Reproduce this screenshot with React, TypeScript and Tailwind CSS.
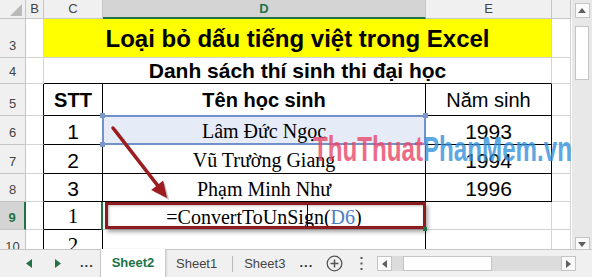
import React from "react";

const hdrCell =
  "h-full flex items-center justify-center border-r border-b border-[#c6c6c6]";

function RowHead({ n, active }: { n: string; active?: boolean }) {
  return active ? (
    <div className="w-[26px] h-full shrink-0 bg-[#d4d4d4] border-r-2 border-b border-r-[#217346] border-b-[#c6c6c6] flex items-end justify-center pb-[5px] text-[13px] leading-none font-bold text-[#217346]">
      {n}
    </div>
  ) : (
    <div className="w-[26px] h-full shrink-0 bg-[#f0f0f0] border-r border-b border-[#c6c6c6] flex items-end justify-center pb-[5px] text-[13px] leading-none text-[#444]">
      {n}
    </div>
  );
}

export default function App() {
  return (
    <div className="w-[592px] h-[277px] overflow-hidden bg-white font-['Liberation_Sans',Arial,sans-serif] text-black">
      <div className="flex h-[249px]">
        {/* Grid */}
        <div className="relative w-[572px] h-[249px] overflow-hidden">
          {/* header row */}
          <div className="flex h-[19px] bg-[#f0f0f0] text-[13px] text-[#444]">
            <div className="w-[26px] h-full border-r border-b border-[#c6c6c6] flex items-end justify-end pr-[3px] pb-[2px]">
              <svg width="12" height="12" viewBox="0 0 12 12">
                <polygon points="12,0 12,12 0,12" fill="#b9b9b9" />
              </svg>
            </div>
            <div className={"w-[18px] " + hdrCell}>B</div>
            <div className={"w-[59px] " + hdrCell}>C</div>
            <div className="w-[323px] h-full flex items-center justify-center border-r border-[#c6c6c6] border-b-2 border-b-[#217346] bg-[#d4d4d4] text-[#217346] font-bold">
              D
            </div>
            <div className={"w-[126px] " + hdrCell}>E</div>
            <div className={"w-[19px] " + hdrCell}></div>
          </div>

          {/* Row 3 */}
          <div className="flex h-[39px]">
            <RowHead n="3" />
            <div className="w-[18px] h-full border-r border-b border-[#d4d4d4]" />
            <div className="w-[508px] h-full bg-[#ffff00] border-r border-b border-[#d4d4d4] flex items-center justify-center text-[24px] font-bold leading-none pt-[1px]">
              Loại bỏ dấu tiếng việt trong Excel
            </div>
            <div className="w-[19px] h-full border-r border-b border-[#d4d4d4]" />
          </div>

          {/* Row 4 */}
          <div className="flex h-[26px]">
            <RowHead n="4" />
            <div className="w-[18px] h-full border-r border-b border-[#d4d4d4]" />
            <div className="w-[508px] h-full border-r border-b border-r-[#d4d4d4] border-b-black flex items-center justify-center text-[21px] font-bold leading-none">
              Danh sách thí sinh thi đại học
            </div>
            <div className="w-[19px] h-full border-r border-b border-[#d4d4d4]" />
          </div>

          {/* Row 5 */}
          <div className="flex h-[32px]">
            <RowHead n="5" />
            <div className="w-[18px] h-full border-r border-b border-r-black border-b-[#d4d4d4]" />
            <div className="w-[59px] h-full border-r border-b border-black flex items-center justify-center text-[20px] font-bold leading-none">
              STT
            </div>
            <div className="w-[323px] h-full border-r border-b border-black flex items-center justify-center text-[20px] font-bold leading-none">
              Tên học sinh
            </div>
            <div className="w-[126px] h-full border-r border-b border-black flex items-center justify-center text-[20px] leading-none">
              Năm sinh
            </div>
            <div className="w-[19px] h-full border-r border-b border-[#d4d4d4]" />
          </div>

          {/* Row 6 */}
          <div className="flex h-[29px]">
            <RowHead n="6" />
            <div className="w-[18px] h-full border-r border-b border-r-black border-b-[#d4d4d4]" />
            <div className="w-[59px] h-full border-r border-b border-black flex items-center justify-center text-[21px] leading-none pt-[2px]">
              1
            </div>
            <div className="w-[323px] h-full bg-[#e6ecf7] border-r border-b border-black flex items-center justify-center text-[20px] leading-none pt-[2px] font-['Liberation_Serif','Times_New_Roman',serif]">
              Lâm Đức Ngọc
            </div>
            <div className="w-[126px] h-full border-r border-b border-black flex items-center justify-center text-[21px] leading-none pt-[2px]">
              1993
            </div>
            <div className="w-[19px] h-full border-r border-b border-[#d4d4d4]" />
          </div>

          {/* Row 7 */}
          <div className="flex h-[29px]">
            <RowHead n="7" />
            <div className="w-[18px] h-full border-r border-b border-r-black border-b-[#d4d4d4]" />
            <div className="w-[59px] h-full border-r border-b border-black flex items-center justify-center text-[21px] leading-none pt-[2px]">
              2
            </div>
            <div className="w-[323px] h-full border-r border-b border-black flex items-center justify-center text-[20px] leading-none pt-[2px] font-['Liberation_Serif','Times_New_Roman',serif]">
              Vũ Trường Giang
            </div>
            <div className="w-[126px] h-full border-r border-b border-black flex items-center justify-center text-[21px] leading-none pt-[2px]">
              1994
            </div>
            <div className="w-[19px] h-full border-r border-b border-[#d4d4d4]" />
          </div>

          {/* Row 8 */}
          <div className="flex h-[28px]">
            <RowHead n="8" />
            <div className="w-[18px] h-full border-r border-b border-r-black border-b-[#d4d4d4]" />
            <div className="w-[59px] h-full border-r border-b border-black flex items-center justify-center text-[21px] leading-none pt-[2px]">
              3
            </div>
            <div className="w-[323px] h-full border-r border-b border-black flex items-center justify-center text-[20px] leading-none pt-[2px] font-['Liberation_Serif','Times_New_Roman',serif]">
              Phạm Minh Như
            </div>
            <div className="w-[126px] h-full border-r border-b border-black flex items-center justify-center text-[21px] leading-none pt-[2px]">
              1996
            </div>
            <div className="w-[19px] h-full border-r border-b border-[#d4d4d4]" />
          </div>

          {/* Row 9 */}
          <div className="flex h-[28px]">
            <RowHead n="9" active />
            <div className="w-[18px] h-full border-r border-b border-r-black border-b-[#d4d4d4]" />
            <div className="w-[59px] h-full border-r border-b border-black flex items-center justify-center text-[21px] leading-none pt-[2px] font-['Liberation_Serif','Times_New_Roman',serif]">
              1
            </div>
            <div className="w-[323px] h-full border-r border-b border-r-black border-b-[#d4d4d4] flex items-center justify-center text-[20px] leading-none pt-[2px] font-['Liberation_Serif','Times_New_Roman',serif]">
              <span>
                =ConvertToUnSign(<span className="text-[#4a7cc4]">D6</span>)
              </span>
            </div>
            <div className="w-[126px] h-full border-r border-b border-[#d4d4d4]" />
            <div className="w-[19px] h-full border-r border-b border-[#d4d4d4]" />
          </div>

          {/* Row 10 */}
          <div className="flex h-[29px]">
            <RowHead n="10" />
            <div className="w-[18px] h-full border-r border-b border-r-black border-b-[#d4d4d4]" />
            <div className="w-[59px] h-full border-r border-b border-r-black border-b-[#d4d4d4] flex items-center justify-center text-[21px] leading-none pt-[2px] font-['Liberation_Serif','Times_New_Roman',serif]">
              2
            </div>
            <div className="w-[323px] h-full border-r border-b border-r-black border-b-[#d4d4d4]" />
            <div className="w-[126px] h-full border-r border-b border-[#d4d4d4]" />
            <div className="w-[19px] h-full border-r border-b border-[#d4d4d4]" />
          </div>

          {/* D6 selection outline */}
          <div className="absolute left-[102px] top-[115px] w-[324px] h-[30px] border-2 border-[#7391c9]" />
          <div className="absolute left-[100px] top-[113px] w-[5px] h-[5px] bg-[#7b96c9]" />
          <div className="absolute left-[100px] top-[142px] w-[5px] h-[5px] bg-[#7b96c9]" />
          <div className="absolute left-[423px] top-[113px] w-[5px] h-[5px] bg-[#7b96c9]" />

          {/* active cell indicator */}
          <div className="absolute left-[101px] top-[202px] w-[2px] h-[28px] bg-[#217346]" />
          {/* red annotation box */}
          <div className="absolute left-[105px] top-[202px] w-[321px] h-[27px] border-[3px] border-[#8c1b1d] shadow-[2px_3px_4px_rgba(0,0,0,0.35),inset_1px_1px_3px_rgba(0,0,0,0.25)]" />
          <div className="absolute left-[423px] top-[227px] w-[4px] h-[4px] bg-[#217346]" />
          {/* text cursor */}
          <div className="absolute left-[307px] top-[204px] w-px h-[23px] bg-black" />

          {/* arrow */}
          <svg
            className="absolute left-0 top-0"
            width="572"
            height="249"
            viewBox="0 0 572 249"
          >
            <g opacity="0.25" transform="translate(2,2)">
              <line x1="113" y1="128" x2="158" y2="186" stroke="#000" strokeWidth="3.5" />
              <polygon points="167,198 151.7,189.6 162.7,181" fill="#000" />
            </g>
            <line
              x1="113"
              y1="128"
              x2="158"
              y2="186"
              stroke="#9c1c1f"
              strokeWidth="3.5"
              strokeLinecap="round"
            />
            <polygon points="167,198 151.2,190 163.2,180.6" fill="#9c1c1f" />
          </svg>

          {/* watermark */}
          <div className="absolute left-[313px] top-[131px] whitespace-nowrap origin-left scale-x-[0.69] text-[35px] leading-none font-bold opacity-80">
            <span className="text-[#e8486a]">ThuThuat</span>
            <span className="text-[#3592dc]">PhanMem.vn</span>
          </div>
        </div>

        {/* Vertical scrollbar */}
        <div className="w-[20px] h-[249px] bg-[#e8e8e8] flex flex-col items-center pt-[3px]">
          <div className="w-[15px] h-[15px] bg-[#fafafa] border border-[#c4c4c4] flex items-center justify-center">
            <svg width="8" height="5" viewBox="0 0 8 5">
              <polygon points="0,5 8,5 4,0" fill="#606060" />
            </svg>
          </div>
          <div className="mt-[8px] w-[14px] h-[54px] bg-white border border-[#c4c4c4]" />
          <div className="flex-1" />
          <div className="w-[15px] h-[12px] bg-[#fafafa] border border-b-0 border-[#c4c4c4] flex items-start justify-center pt-[4px]">
            <svg width="8" height="5" viewBox="0 0 8 5">
              <polygon points="0,0 8,0 4,5" fill="#606060" />
            </svg>
          </div>
        </div>
      </div>

      {/* Tab bar */}
      <div className="flex h-[28px] bg-[#f0f0f0] text-[13px] text-[#444]">
        <div className="w-[100px] h-full border-t border-[#c6c6c6] flex items-center">
          <svg className="ml-[26px]" width="6" height="9" viewBox="0 0 6 9">
            <polygon points="6,0 6,9 0,4.5" fill="#217346" />
          </svg>
          <svg className="ml-[23px]" width="6" height="9" viewBox="0 0 6 9">
            <polygon points="0,0 0,9 6,4.5" fill="#217346" />
          </svg>
          <span className="ml-[19px] font-bold tracking-[1px] text-[#333] pb-[1px]">...</span>
        </div>
        <div className="w-[66px] h-full bg-white border-l border-r border-[#c6c6c6] flex items-center justify-center font-bold text-[#217346] shadow-[1px_0_2px_rgba(0,0,0,0.1)]">
          Sheet2
        </div>
        <div className="flex-1 h-full border-t border-[#c6c6c6] flex items-center">
          <span className="ml-[10px]">Sheet1</span>
          <div className="ml-[15px] w-px h-[16px] bg-[#b8b8b8]" />
          <span className="ml-[11px]">Sheet3</span>
          <span className="ml-[14px] font-bold tracking-[1px] text-[#333] pb-[1px]">...</span>
          <svg className="ml-[13px]" width="17" height="17" viewBox="0 0 17 17">
            <circle cx="8.5" cy="8.5" r="7.3" fill="none" stroke="#555" strokeWidth="1.3" />
            <line x1="8.5" y1="4.5" x2="8.5" y2="12.5" stroke="#555" strokeWidth="1.5" />
            <line x1="4.5" y1="8.5" x2="12.5" y2="8.5" stroke="#555" strokeWidth="1.5" />
          </svg>
          <svg className="ml-[17px]" width="3" height="13" viewBox="0 0 3 13">
            <rect x="0.5" y="0" width="2" height="2" fill="#555" />
            <rect x="0.5" y="5.5" width="2" height="2" fill="#555" />
            <rect x="0.5" y="11" width="2" height="2" fill="#555" />
          </svg>
          {/* horizontal scrollbar */}
          <div className="ml-[14px] flex items-center h-[15px]">
            <div className="w-[15px] h-[15px] bg-[#fafafa] border border-[#c4c4c4] flex items-center justify-center">
              <svg width="5" height="8" viewBox="0 0 5 8">
                <polygon points="5,0 5,8 0,4" fill="#606060" />
              </svg>
            </div>
            <div className="w-[169px] h-[15px] bg-[#dcdcdc] flex items-center">
              <div className="ml-[11px] w-[89px] h-[15px] bg-white border border-[#c4c4c4]" />
            </div>
            <div className="w-[15px] h-[15px] bg-[#fafafa] border border-[#c4c4c4] flex items-center justify-center">
              <svg width="5" height="8" viewBox="0 0 5 8">
                <polygon points="0,0 0,8 5,4" fill="#606060" />
              </svg>
            </div>
          </div>
        </div>
      </div>
    </div>
  );
}
